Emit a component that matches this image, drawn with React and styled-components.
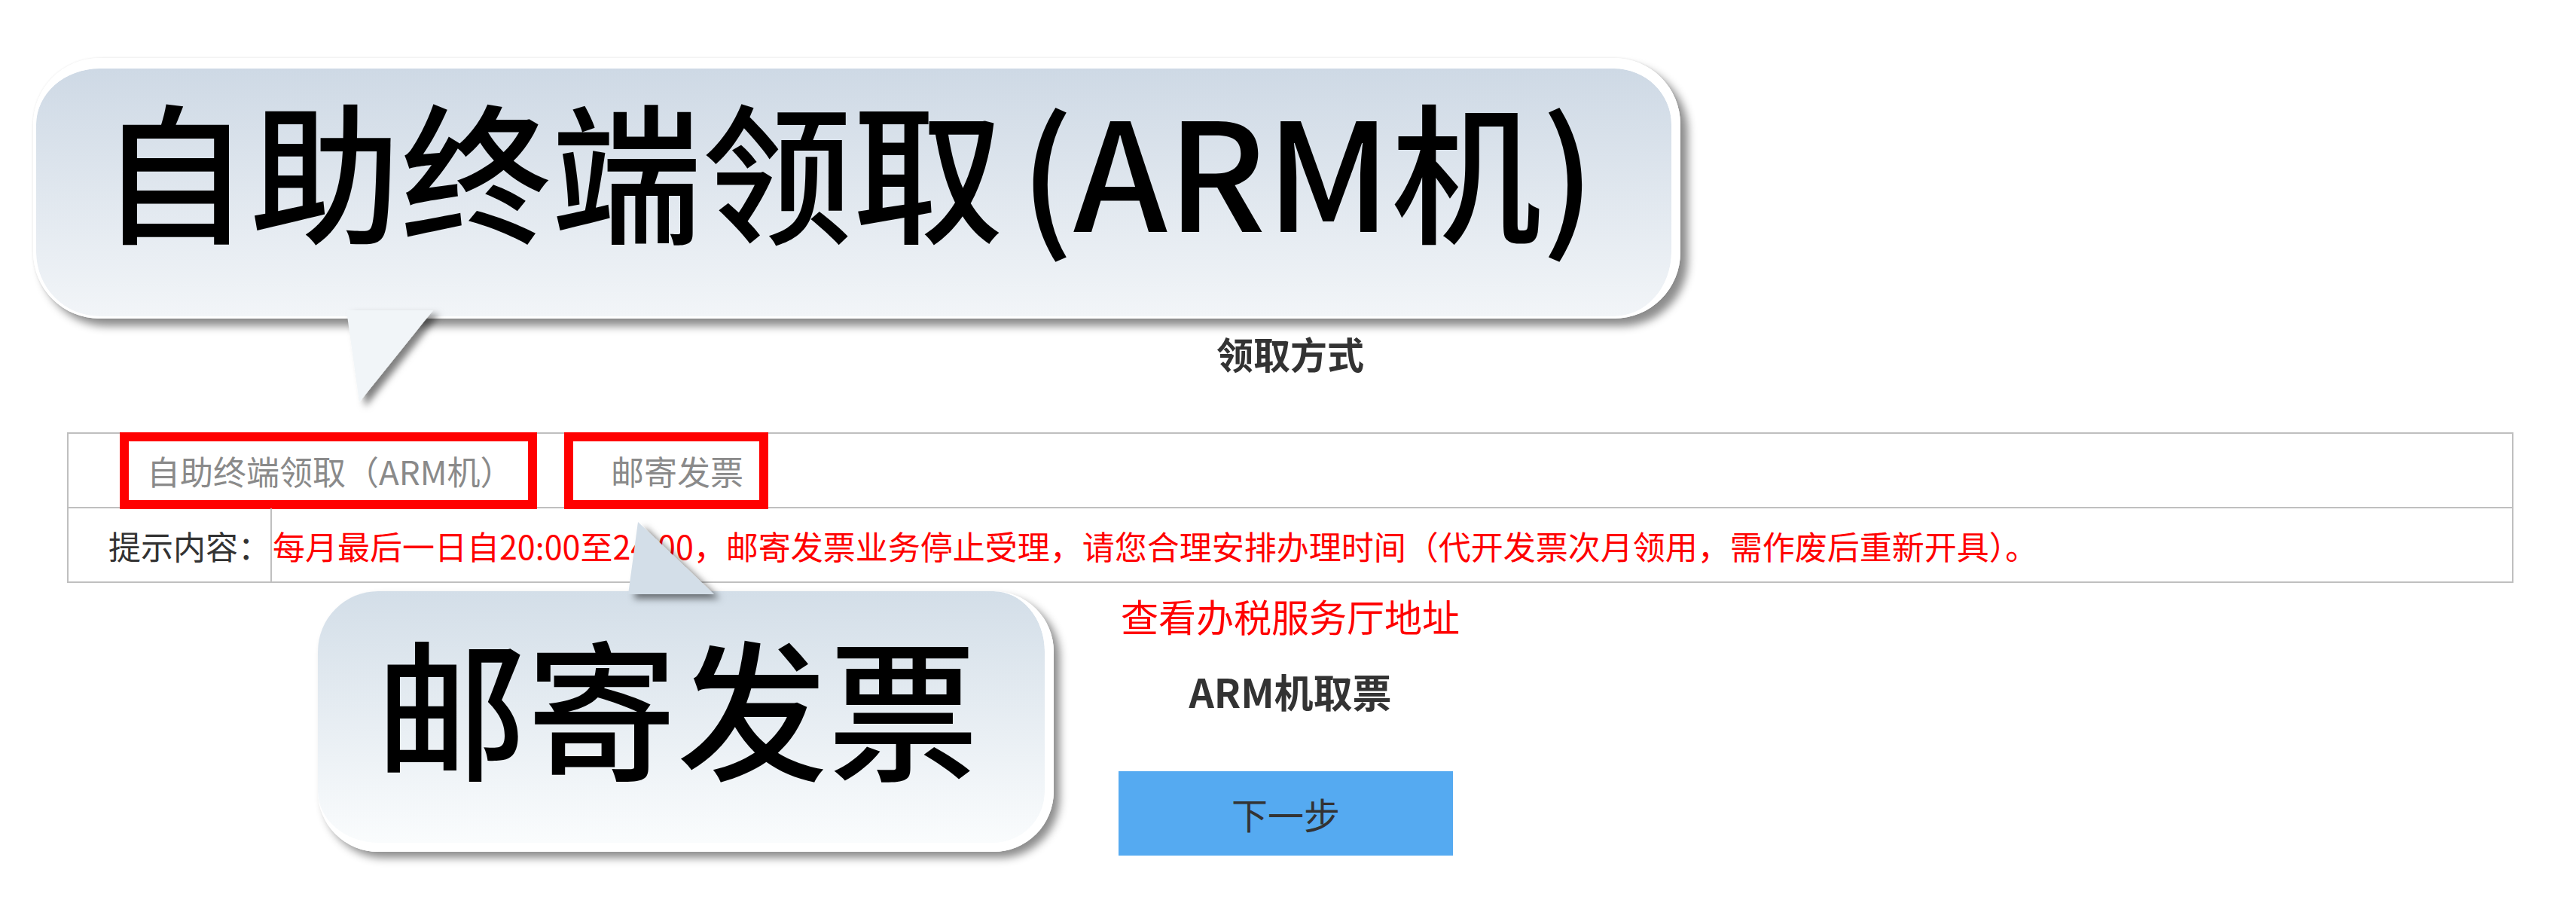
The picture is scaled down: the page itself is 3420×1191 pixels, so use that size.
import React from "react";
import styled, { createGlobalStyle } from "styled-components";

const GlobalStyle = createGlobalStyle`
  html, body {
    margin: 0;
    padding: 0;
    background: #fff;
  }
  body {
    font-family: "Noto Sans CJK SC", "Noto Sans", sans-serif;
    overflow: hidden;
  }
`;

function Tail({ points, fill, style }) {
  return (
    <TailSvg style={style} width="170" height="140">
      <defs>
        <filter id={"sh" + fill.slice(1)} x="-50%" y="-50%" width="200%" height="200%">
          <feDropShadow dx="8" dy="6" stdDeviation="5" floodColor="#000" floodOpacity="0.5" />
        </filter>
      </defs>
      <polygon points={points} fill={fill} filter={"url(#sh" + fill.slice(1) + ")"} />
    </TailSvg>
  );
}

function App() {
  return (
    <Page>
      <GlobalStyle />
      <Title>领取方式</Title>
      <Table>
        <OptionRow>
          <Option $w="554px" $pl="24px">自助终端领取（ARM机）</Option>
          <Option $w="271px" $pl="50px">邮寄发票</Option>
        </OptionRow>
        <LabelCell>提示内容：</LabelCell>
        <HintCell>
          每月最后一日自20:00至24:00，邮寄发票业务停止受理，请您合理安排办理时间（代开发票次月领用，需作废后重新开具）。
        </HintCell>
      </Table>
      <HallLink>查看办税服务厅地址</HallLink>
      <SubTitle>ARM机取票</SubTitle>
      <NextButton>下一步</NextButton>

      <BigBubble>
        <BubbleText>
          自助终端领取<Paren $ml="22px">(</Paren>ARM机<Paren>)</Paren>
        </BubbleText>
        <Tail
          fill="#f1f5f8"
          points="16,2 131,2 33,124"
          style={{ left: 396, bottom: -130 }}
        />
      </BigBubble>

      <SmallBubble>
        <BubbleText>邮寄发票</BubbleText>
        <Tail
          fill="#d3dee8"
          points="12,112 126,112 25,16"
          style={{ left: 400, top: -108 }}
        />
      </SmallBubble>
    </Page>
  );
}
export default App;

const Page = styled.div`
  position: relative;
  width: 3420px;
  height: 1191px;
  box-sizing: border-box;
  padding: 420px 83px 0 89px;
  display: flex;
  flex-direction: column;
  align-items: center;
`;

const Title = styled.div`
  height: 98px;
  line-height: 98px;
  font-size: 49px;
  font-weight: 700;
  color: #333;
`;

const Table = styled.div`
  margin-top: 56px;
  align-self: stretch;
  display: grid;
  grid-template-columns: 270px 1fr;
  border: 2px solid #bfbfbf;
`;

const OptionRow = styled.div`
  grid-column: 1 / -1;
  height: 97px;
  border-bottom: 2px solid #bfbfbf;
  display: flex;
  align-items: center;
  gap: 36px;
  padding-left: 68px;
`;

const Option = styled.div`
  box-sizing: border-box;
  width: ${(p) => p.$w};
  height: 102px;
  padding-left: ${(p) => p.$pl};
  border: 12px solid #ff0000;
  display: flex;
  align-items: center;
  font-size: 44px;
  color: #8a8a8a;
  white-space: nowrap;
`;

const LabelCell = styled.div`
  height: 97px;
  border-right: 2px solid #bfbfbf;
  display: flex;
  align-items: center;
  justify-content: flex-end;
  padding-right: 0;
  font-size: 43px;
  color: #333;
`;

const HintCell = styled.div`
  height: 97px;
  display: flex;
  align-items: center;
  padding-left: 1px;
  font-size: 43px;
  color: #ff0000;
  white-space: nowrap;
`;

const HallLink = styled.div`
  height: 86px;
  line-height: 86px;
  font-size: 50px;
  color: #ff0000;
`;

const SubTitle = styled.div`
  height: 116px;
  line-height: 116px;
  font-size: 52px;
  font-weight: 700;
  color: #333;
`;

const NextButton = styled.div`
  margin-top: 48px;
  margin-right: 12px;
  width: 444px;
  height: 112px;
  background: #55aaf1;
  color: #333;
  font-size: 48px;
  display: flex;
  align-items: center;
  justify-content: center;
`;

const Bubble = styled.div`
  position: absolute;
  box-sizing: border-box;
  display: flex;
  align-items: flex-start;
  border-style: solid;
  border-color: #fff;
  border-radius: 88px;
  color: #000;
  z-index: 2;
`;

const BigBubble = styled(Bubble)`
  left: 44px;
  top: 77px;
  width: 2187px;
  height: 346px;
  border-width: 14px 12px 3px 4px;
  padding: 30px 0 0 84px;
  background: linear-gradient(#ced9e5, #f2f5f8);
  background-clip: padding-box;
  box-shadow: 10px 10px 12px rgba(0, 0, 0, 0.45), 0 0 3px rgba(0, 0, 0, 0.1);
`;

const SmallBubble = styled(Bubble)`
  left: 422px;
  top: 785px;
  width: 977px;
  height: 346px;
  border-width: 0 12px 12px 0;
  border-radius: 80px;
  padding: 49px 0 0 77px;
  background: linear-gradient(#d3dee8, #fafcfd);
  background-clip: padding-box;
  box-shadow: 8px 8px 12px rgba(0, 0, 0, 0.45);
`;

const BubbleText = styled.div`
  font-size: 200px;
  line-height: 200px;
  font-weight: 500;
  white-space: nowrap;
`;

const Paren = styled.span`
  margin-left: ${(p) => p.$ml || "0"};
`;

const TailSvg = styled.svg`
  position: absolute;
  overflow: visible;
`;
